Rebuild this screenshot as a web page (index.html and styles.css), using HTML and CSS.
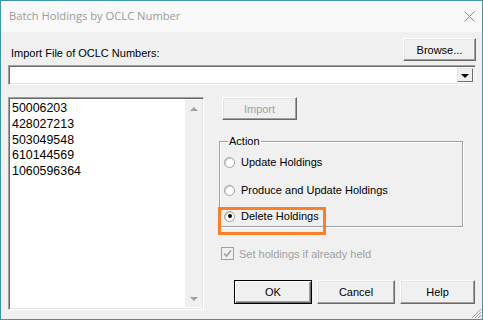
FILE: index.html
```html
<!DOCTYPE html>
<html>
<head>
<meta charset="utf-8">
<link rel="stylesheet" href="styles.css">
</head>
<body>
<div class="window">
  <div class="titlebar">
    <span class="title">Batch Holdings by OCLC Number</span>
    <svg class="close" width="11" height="11" viewBox="0 0 11 11"><path d="M0.5 0.5L10.5 10.5M10.5 0.5L0.5 10.5" stroke="#8a8a8a" stroke-width="1" fill="none"/></svg>
  </div>
  <div class="content">
    <div class="row-top">
      <label class="lbl-import">Import File of OCLC Numbers:</label>
      <button class="btn btn-browse">Browse...</button>
    </div>
    <div class="combo">
      <div class="combo-field"></div>
      <div class="combo-arrow"><span class="tri-down"></span></div>
    </div>
    <div class="main">
      <div class="listbox">
        <div class="list-items">
          <div>50006203</div>
          <div>428027213</div>
          <div>503049548</div>
          <div>610144569</div>
          <div>1060596364</div>
        </div>
        <div class="scrollbar">
          <span class="sb-up"></span>
          <span class="sb-down"></span>
        </div>
      </div>
      <div class="right">
        <button class="btn btn-import" disabled>Import</button>
        <fieldset class="group">
          <legend>Action</legend>
          <div class="radio-row r1"><span class="radio"></span><span>Update Holdings</span></div>
          <div class="radio-row r2"><span class="radio"></span><span>Produce and Update Holdings</span></div>
          <div class="radio-row r3"><span class="radio checked"></span><span>Delete Holdings</span></div>
          <div class="highlight"></div>
        </fieldset>
        <div class="check-row">
          <span class="checkbox"><svg width="11" height="11" viewBox="0 0 11 11"><path d="M2 5.5L4.5 8L9 2.5" stroke="#a0a0a0" stroke-width="1.6" fill="none"/></svg></span>
          <span class="check-label">Set holdings if already held</span>
        </div>
        <div class="buttons">
          <button class="btn btn-ok">OK</button>
          <button class="btn">Cancel</button>
          <button class="btn btn-help">Help</button>
        </div>
      </div>
    </div>
  </div>
  <svg class="grip" width="12" height="12" viewBox="0 0 12 12"><path d="M11 2L2 11M11 5L5 11M11 8L8 11" stroke="#a0a0a0" stroke-width="1" fill="none"/></svg>
</div>
</body>
</html>
```

FILE: styles.css
```css
* { box-sizing: border-box; }
html, body { margin: 0; padding: 0; }
body {
  width: 483px; height: 320px; overflow: hidden;
  font-family: "Liberation Sans", Arial, sans-serif;
  font-size: 11px; color: #000;
}
.window {
  position: relative;
  width: 483px; height: 320px;
  border: 1px solid #3f95ad;
  background: #f0f0f0;
}
.titlebar {
  height: 31px;
  background: #f9f9f9;
  display: flex; align-items: center; justify-content: space-between;
  padding: 0 7px 0 8px;
}
.title {
  font-family: "Open Sans", "Liberation Sans", sans-serif;
  font-size: 11.2px; color: #9a9a9a;
  margin-top: -2px;
}
.close { margin-top: -1px; }
.content { padding: 6px 6px 0 7px; }
.row-top {
  display: flex; justify-content: space-between; align-items: flex-end;
}
.lbl-import { padding-left: 3px; margin-bottom: 2px; }
.btn {
  font-family: "Liberation Sans", Arial, sans-serif;
  font-size: 11px; color: #000;
  background: #f0f0f0;
  height: 23px; width: 75px; padding: 0;
  border: 1px solid;
  border-color: #fff #696969 #696969 #fff;
  box-shadow: inset -1px -1px 0 #a0a0a0, inset 1px 1px 0 #e3e3e3;
}
.btn-browse { width: 73px; }
.btn:disabled { color: #a0a0a0; }
.combo {
  margin-top: 4px; height: 20px;
  display: flex;
  border: 1px solid; border-color: #a0a0a0 #fff #fff #a0a0a0;
  box-shadow: inset 1px 1px 0 #696969, inset -1px -1px 0 #e3e3e3;
  background: #fff;
}
.combo-field { flex: 1; }
.combo-arrow {
  width: 16px; margin: 2px 2px 2px 0;
  background: #f0f0f0;
  border: 1px solid; border-color: #e3e3e3 #696969 #696969 #e3e3e3;
  display: flex; align-items: center; justify-content: center;
}
.tri-down {
  width: 0; height: 0;
  border-left: 4px solid transparent; border-right: 4px solid transparent;
  border-top: 4px solid #000;
  margin-top: 1px;
}
.main {
  margin-top: 12px;
  display: grid; grid-template-columns: 196px 1fr; column-gap: 14px;
}
.listbox {
  height: 213px;
  display: flex;
  border: 1px solid; border-color: #a0a0a0 #fff #fff #a0a0a0;
  box-shadow: inset 1px 1px 0 #696969, inset -1px -1px 0 #e3e3e3;
  background: #fff;
  padding: 2px 1px 2px 2px;
}
.list-items {
  flex: 1;
  font-size: 12.4px; line-height: 15.8px;
  padding-left: 1px; padding-top: 1px;
}
.scrollbar {
  width: 17px;
  background: #f0f0f0;
  display: flex; flex-direction: column; justify-content: space-between; align-items: center;
  padding: 7px 0 6px 0;
}
.sb-up, .sb-down {
  width: 0; height: 0;
  border-left: 4px solid transparent; border-right: 4px solid transparent;
}
.sb-up { border-bottom: 4px solid #a0a0a0; }
.sb-down { border-top: 4px solid #a0a0a0; }
.right { display: flex; flex-direction: column; align-items: flex-start; }
.btn-import { margin-left: 4px; }
.group {
  position: relative;
  margin: 15px 0 0 1px; padding: 0;
  width: 244px; height: 92px;
  border: 1px solid #a0a0a0;
  box-shadow: inset 1px 1px 0 #fff, 1px 1px 0 #fff;
}
.group legend {
  padding: 0 1px; margin-left: 8px;
  line-height: 12px;
}
.radio-row {
  display: flex; align-items: center; gap: 6px;
  height: 16px; padding-left: 4px;
}
.r1 { margin-top: 7px; }
.r2 { margin-top: 12px; }
.r3 { margin-top: 10px; }
.radio {
  width: 11px; height: 11px; border-radius: 50%;
  background: #fff;
  border: 1px solid #a0a0a0;
  box-shadow: inset 1px 1px 0 #d0d0d0;
  display: flex; align-items: center; justify-content: center;
}
.radio.checked::after {
  content: ""; width: 4px; height: 4px; border-radius: 50%; background: #000;
}
.highlight {
  position: absolute; left: -2px; top: 60px;
  width: 108px; height: 28px;
  border: 3px solid #f7812b;
}
.check-row {
  display: flex; align-items: center; gap: 5px;
  margin: 20px 0 0 3px; color: #a0a0a0;
}
.checkbox {
  width: 13px; height: 13px;
  border: 1px solid #a0a0a0;
  background: #f0f0f0;
  display: flex; align-items: center; justify-content: center;
}
.buttons {
  display: flex; gap: 5px;
  margin: 20px 0 0 16px;
}
.buttons .btn { width: 78px; height: 24px; }
.buttons .btn-help { width: 75px; }
.btn-ok {
  border: 1px solid #000;
  box-shadow: inset 1px 1px 0 #fff, inset -1px -1px 0 #696969, inset -2px -2px 0 #a0a0a0;
}
.grip { position: absolute; right: 0; bottom: 0; }
```
